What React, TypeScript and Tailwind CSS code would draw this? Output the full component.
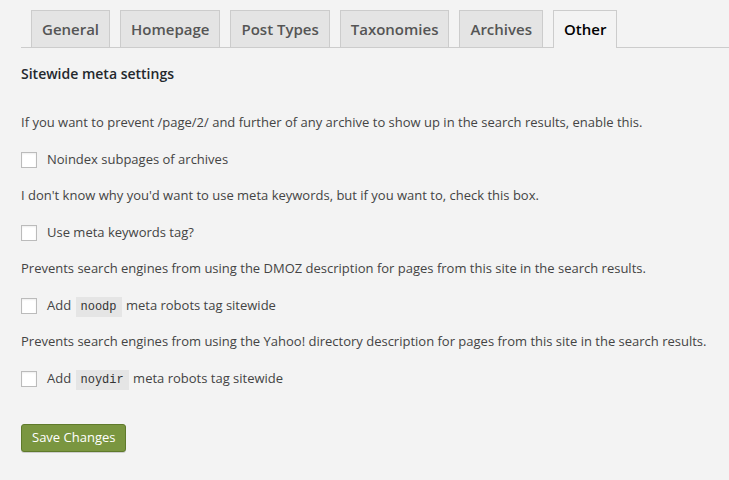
import { useState } from "react"

const tabs = ["General", "Homepage", "Post Types", "Taxonomies", "Archives", "Other"]

const rows: { text: string; label: React.ReactNode }[] = [
  {
    text: "If you want to prevent /page/2/ and further of any archive to show up in the search results, enable this.",
    label: "Noindex subpages of archives",
  },
  {
    text: "I don't know why you'd want to use meta keywords, but if you want to, check this box.",
    label: "Use meta keywords tag?",
  },
  {
    text: "Prevents search engines from using the DMOZ description for pages from this site in the search results.",
    label: (
      <>
        Add <Code>noodp</Code> meta robots tag sitewide
      </>
    ),
  },
  {
    text: "Prevents search engines from using the Yahoo! directory description for pages from this site in the search results.",
    label: (
      <>
        Add <Code>noydir</Code> meta robots tag sitewide
      </>
    ),
  },
]

function Code({ children }: { children: React.ReactNode }) {
  return (
    <code className="mx-[1px] bg-[#e5e5e5] px-[5px] pt-[3px] pb-[3px] font-['Liberation_Mono',monospace] text-[12px] text-[#333]">
      {children}
    </code>
  )
}

export default function App() {
  const [checked, setChecked] = useState<boolean[]>([false, false, false, false])

  return (
    <div className="min-h-[480px] bg-[#f3f3f3] pl-[21px] pr-[0px] font-['Open_Sans',sans-serif] text-[13px] text-[#444]">
      <div className="flex h-[48px] items-end gap-[10px] border-b border-[#ccc] pl-[10px]">
        {tabs.map((t) =>
          t === "Other" ? (
            <div
              key={t}
              className="-mb-[1px] flex h-[38px] items-center border border-b-0 border-[#ccc] bg-[#f3f3f3] px-[10px] pb-[1px] text-[15px] font-semibold text-black"
            >
              {t}
            </div>
          ) : (
            <div
              key={t}
              className="flex h-[37px] items-center border border-b-0 border-[#ccc] bg-[#e4e4e4] px-[10px] text-[15px] font-semibold text-[#555]"
            >
              {t}
            </div>
          )
        )}
      </div>

      <h3 className="mt-[12px] flex h-[26px] items-center text-[14px] font-semibold text-[#23282d]">
        Sitewide meta settings
      </h3>

      <div className="mt-[18.75px]">
        {rows.map((r, i) => (
          <div key={i}>
            <p className="flex h-[36.5px] items-center">{r.text}</p>
            <label className="flex h-[36.5px] items-center">
              <input
                type="checkbox"
                checked={checked[i]}
                onChange={() => setChecked(checked.map((c, j) => (j === i ? !c : c)))}
                className="mr-[10px] h-[16px] w-[16px] appearance-none border border-[#bbb] bg-white shadow-[inset_0_1px_2px_rgba(0,0,0,0.07)] checked:bg-[#1e8cbe]"
              />
              <span>{r.label}</span>
            </label>
          </div>
        ))}
      </div>

      <button className="mt-[27px] h-[28px] rounded-[3px] border border-[#5f7a2b] bg-[#7a9640] px-[10px] text-[13px] text-white shadow-[0_1px_0_rgba(0,0,0,0.15)]">
        Save Changes
      </button>
    </div>
  )
}
